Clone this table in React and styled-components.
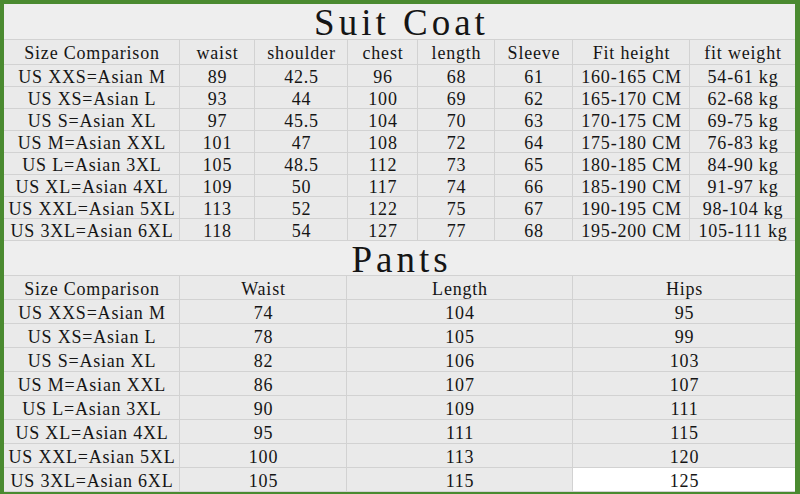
import React from "react";
import styled, { createGlobalStyle } from "styled-components";

const Global = createGlobalStyle`
  html, body { margin: 0; padding: 0; background: #ececec; }
  #root { width: 800px; height: 494px; }
`;

const Frame = styled.div`
  box-sizing: border-box;
  width: 800px;
  height: 494px;
  border-style: solid;
  border-color: #4a8a30;
  border-width: 4px 5px 2px 4px;
  background: #eaeaea;
  font-family: "Liberation Serif", "DejaVu Serif", serif;
  color: #151515;
  overflow: hidden;
  display: flex;
  flex-direction: column;
`;

const Title = styled.div`
  height: ${(p) => p.$h}px;
  box-sizing: border-box;
  border-bottom: 1px solid #d2d2d2;
  background: #eeeeee;
  display: flex;
  align-items: flex-end;
  justify-content: center;
  font-size: 37px;
  letter-spacing: 4px;
  line-height: 28px;
  padding-bottom: ${(p) => p.$pb}px;
  padding-left: 4px;
`;

const Grid = styled.div`
  display: grid;
  grid-template-columns: ${(p) => p.$cols};
  grid-template-rows: ${(p) => p.$headH}px;
  grid-auto-rows: ${(p) => p.$rowH}px;
`;

const Cell = styled.div`
  box-sizing: border-box;
  display: flex;
  align-items: center;
  justify-content: center;
  white-space: nowrap;
  font-size: 18px;
  letter-spacing: 0.8px;
  line-height: 1;
  border-right: ${(p) => (p.$last ? "none" : "1px solid #d2d2d2")};
  border-bottom: 1px solid #d2d2d2;
  background: ${(p) => (p.$white ? "#ffffff" : "transparent")};
  padding-top: 2px;
  padding-left: 1px;
`;

const coatHead = ["Size Comparison", "waist", "shoulder", "chest", "length", "Sleeve", "Fit height", "fit weight"];
const coatRows = [
  ["US XXS=Asian M", "89", "42.5", "96", "68", "61", "160-165 CM", "54-61 kg"],
  ["US XS=Asian L", "93", "44", "100", "69", "62", "165-170 CM", "62-68 kg"],
  ["US S=Asian XL", "97", "45.5", "104", "70", "63", "170-175 CM", "69-75 kg"],
  ["US M=Asian XXL", "101", "47", "108", "72", "64", "175-180 CM", "76-83 kg"],
  ["US L=Asian 3XL", "105", "48.5", "112", "73", "65", "180-185 CM", "84-90 kg"],
  ["US XL=Asian 4XL", "109", "50", "117", "74", "66", "185-190 CM", "91-97 kg"],
  ["US XXL=Asian 5XL", "113", "52", "122", "75", "67", "190-195 CM", "98-104 kg"],
  ["US 3XL=Asian 6XL", "118", "54", "127", "77", "68", "195-200 CM", "105-111 kg"],
];

const pantsHead = ["Size Comparison", "Waist", "Length", "Hips"];
const pantsRows = [
  ["US XXS=Asian M", "74", "104", "95"],
  ["US XS=Asian L", "78", "105", "99"],
  ["US S=Asian XL", "82", "106", "103"],
  ["US M=Asian XXL", "86", "107", "107"],
  ["US L=Asian 3XL", "90", "109", "111"],
  ["US XL=Asian 4XL", "95", "111", "115"],
  ["US XXL=Asian 5XL", "100", "113", "120"],
  ["US 3XL=Asian 6XL", "105", "115", "125"],
];

function Table({ cols, head, rows, headH, rowH, whiteLast }) {
  const n = head.length;
  return (
    <Grid $cols={cols} $headH={headH} $rowH={rowH}>
      {head.map((h, i) => (
        <Cell key={"h" + i} $last={i === n - 1}>{h}</Cell>
      ))}
      {rows.map((r, ri) =>
        r.map((v, ci) => (
          <Cell
            key={ri + "-" + ci}
            $last={ci === n - 1}
            $white={whiteLast && ri === rows.length - 1 && ci === n - 1}
          >
            {v}
          </Cell>
        ))
      )}
    </Grid>
  );
}

export default function App() {
  return (
    <>
      <Global />
      <Frame>
        <Title $h={36} $pb={2.5}>Suit Coat</Title>
        <Table
          cols="176px 75px 93px 70px 77px 78px 117px 105px"
          head={coatHead}
          rows={coatRows}
          headH={25}
          rowH={22}
        />
        <Title $h={35} $pb={1}>Pants</Title>
        <Table
          cols="176px 167px 226px 222px"
          head={pantsHead}
          rows={pantsRows}
          headH={24}
          rowH={24}
          whiteLast
        />
      </Frame>
    </>
  );
}
